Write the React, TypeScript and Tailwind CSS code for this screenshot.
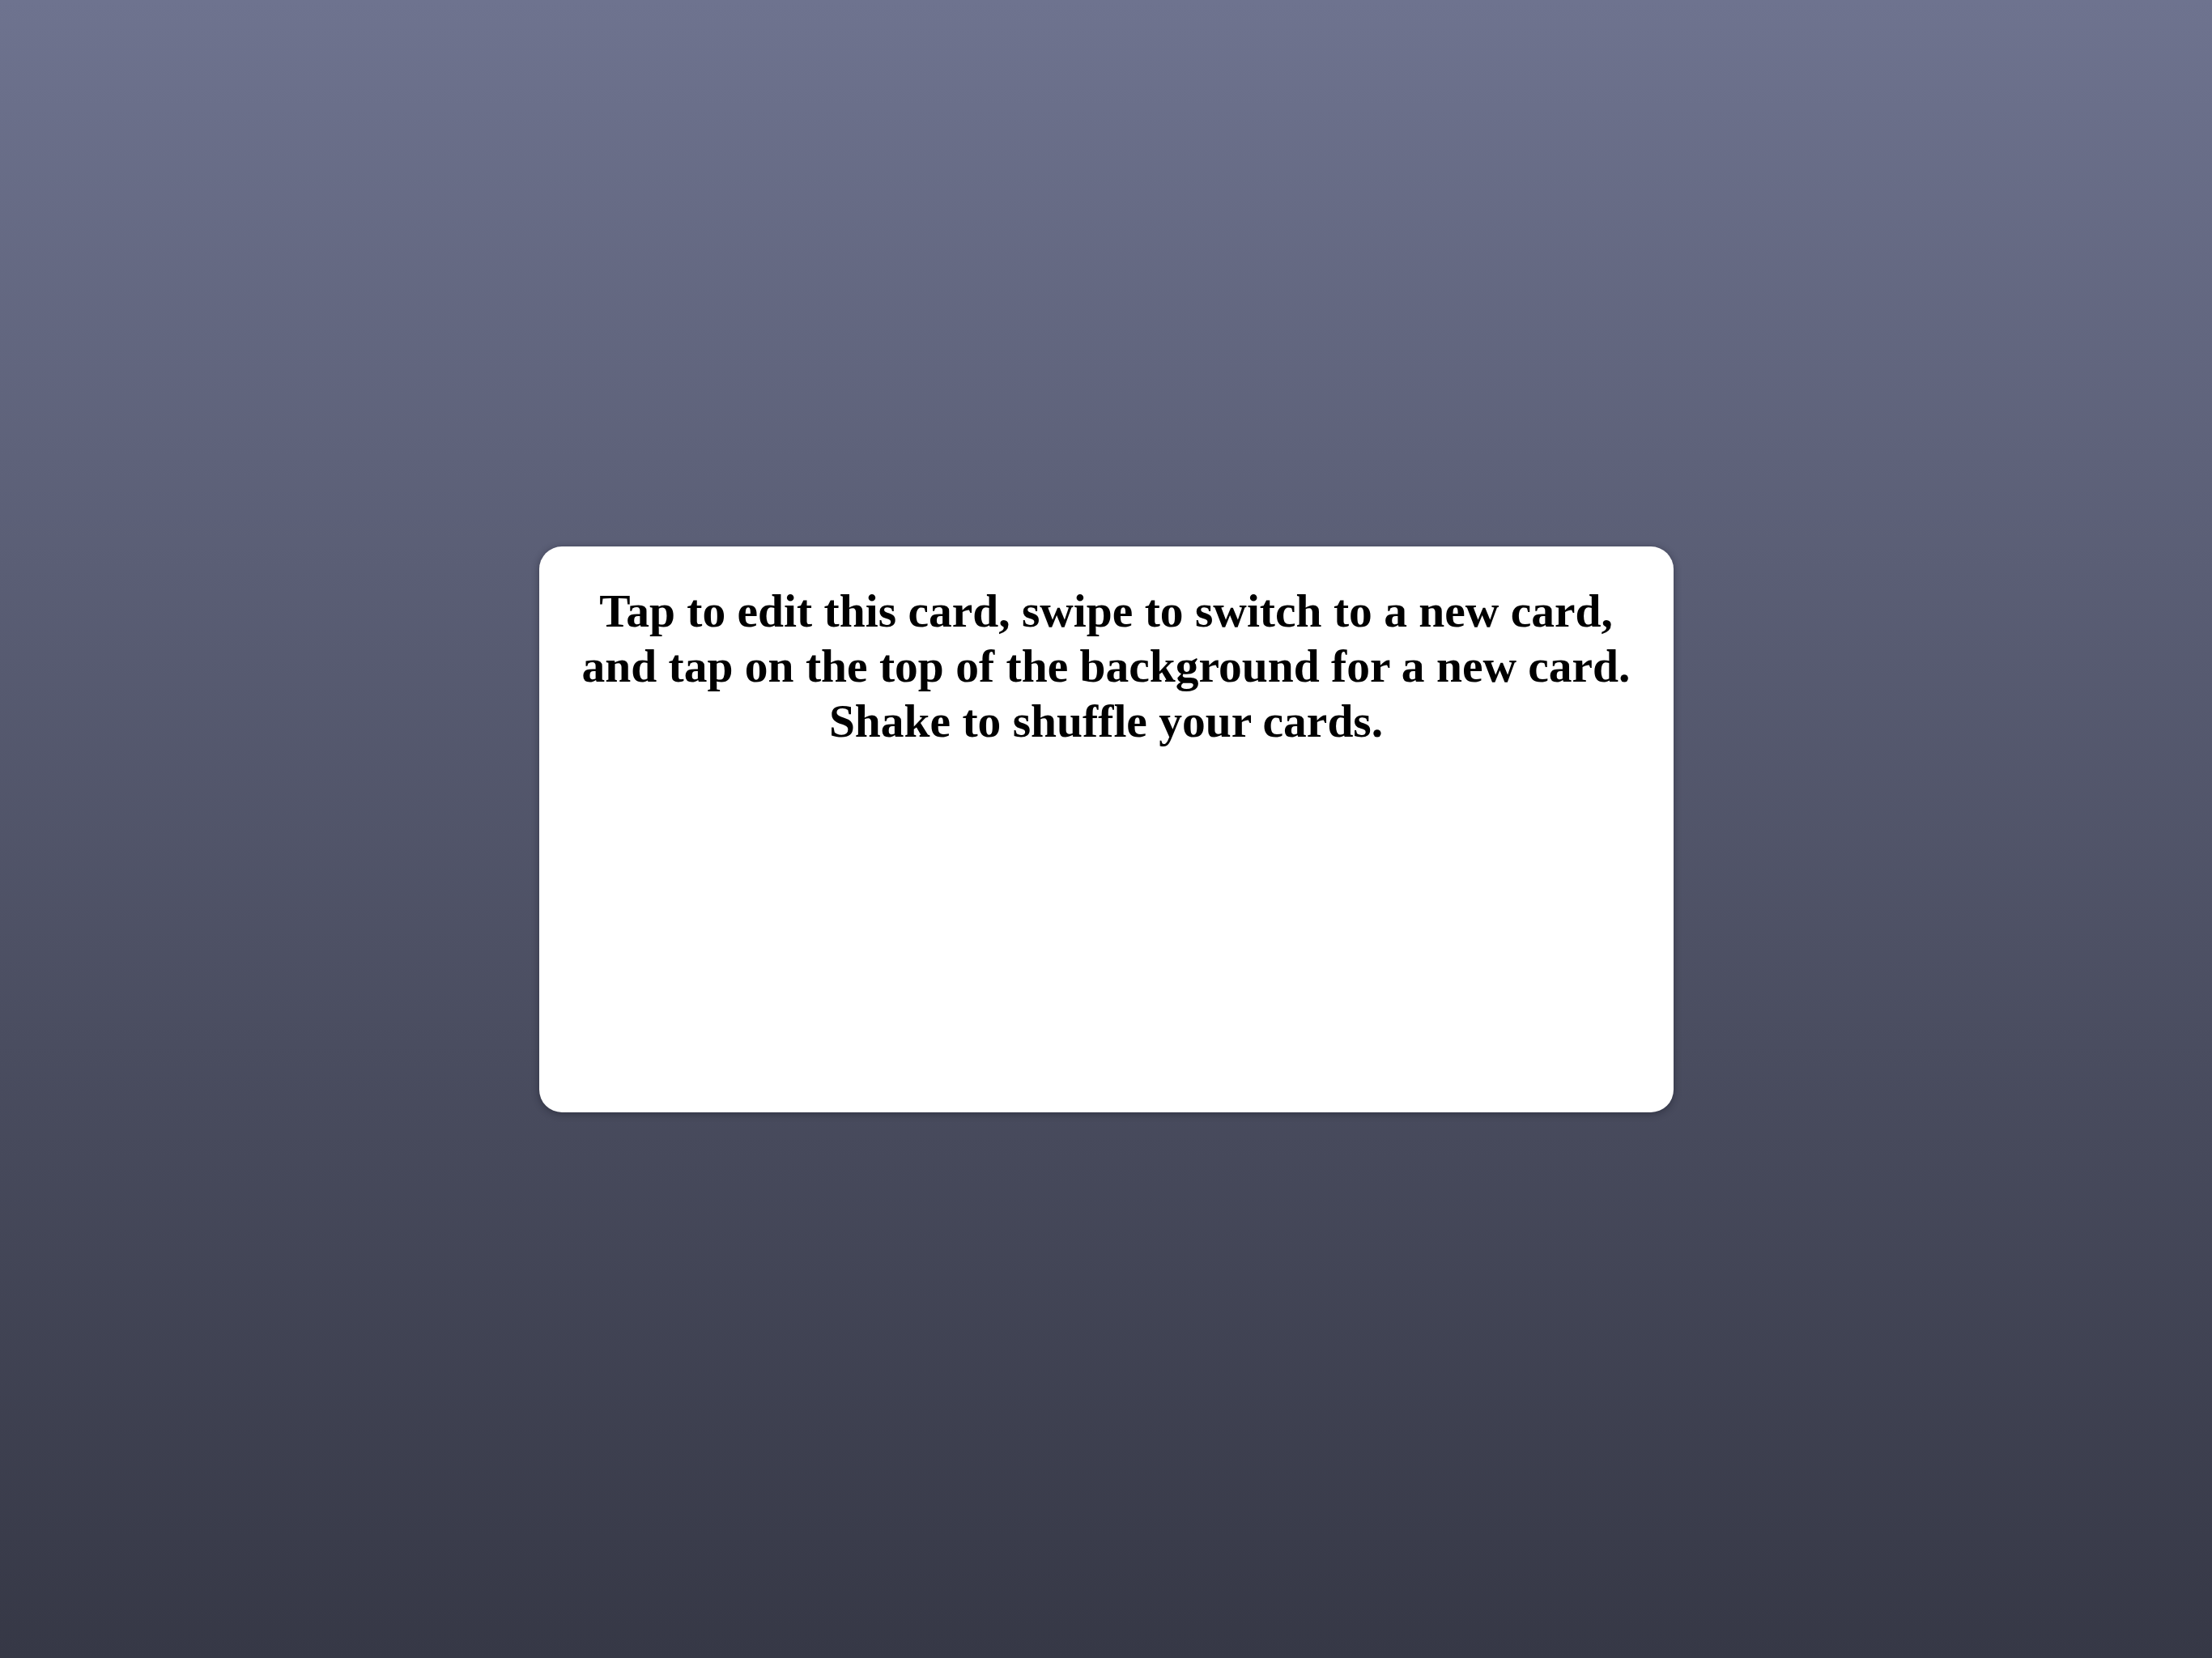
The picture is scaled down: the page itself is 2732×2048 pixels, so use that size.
export default function App() {
  return (
    <div className="flex h-[2048px] w-[2732px] items-center justify-center bg-gradient-to-b from-[#6e738f] to-[#363846]">
      <div className="h-[699px] w-[1401px] rounded-[28px] bg-white px-8 pt-[46px] shadow-[0_2px_10px_rgba(20,22,35,0.45)]">
        <p className="text-center font-['Liberation_Serif',serif] text-[57.5px] font-bold leading-[68px] text-black">
          Tap to edit this card, swipe to switch to a new card,
          <br />
          and tap on the top of the background for a new card.
          <br />
          Shake to shuffle your cards.
        </p>
      </div>
    </div>
  )
}
